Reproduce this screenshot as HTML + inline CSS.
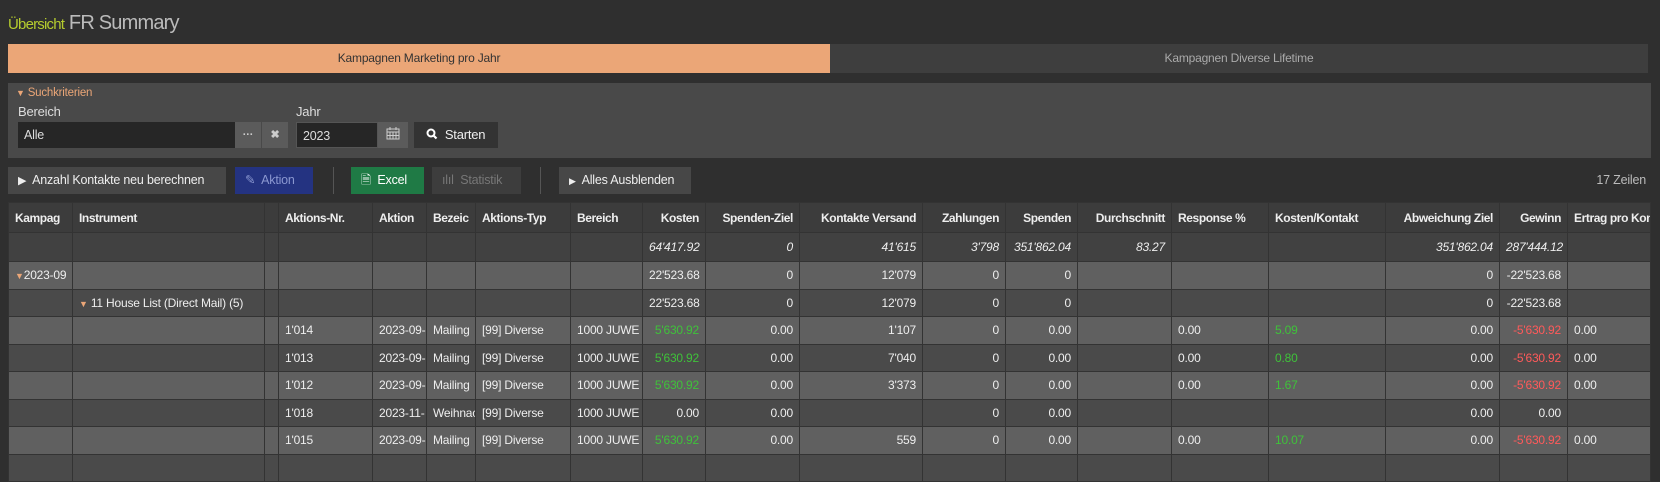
<!DOCTYPE html>
<html><head><meta charset="utf-8"><style>
*{box-sizing:border-box;margin:0;padding:0}
body{width:1660px;height:452px;background:#2f2f2f;font-family:"Liberation Sans Narrow","Liberation Sans",sans-serif;font-size:12px;color:#eee;position:relative;overflow:hidden;letter-spacing:-0.2px}
.a{position:absolute}
.title{left:8px;top:12px;font-size:20px;color:#bbb;letter-spacing:-0.8px}
.title span{color:#b5cc2e;font-size:15px}
.tab{top:44px;height:29px;line-height:29px;text-align:center;font-size:12px}
.panel{left:8px;top:83px;width:1643px;height:75px;background:#494949}
.lbl{font-size:13px;color:#ddd}
.inp{background:#262626;color:#ddd;height:26px;line-height:26px;padding-left:6px;font-size:12.5px}
.ib{background:#5b5b5b;height:26px;color:#ccc;text-align:center;line-height:26px;font-size:11px;font-weight:bold}
.btn{top:167px;height:27px;line-height:27px;font-size:12.5px;padding-left:10px}
.sep{top:167px;width:1px;height:27px;background:#555}
table{position:absolute;left:8px;top:202px;border-collapse:collapse;table-layout:fixed;width:1642px}
td{border:1px solid #333;height:27.5px;padding:0 6px;white-space:nowrap;overflow:hidden;font-size:12px;color:#eee}
tr.h td{background:#3c3c3c;font-weight:bold;height:30px;letter-spacing:-0.4px}
tr.t td{background:#414141;font-style:italic;height:29px}
tr.l td{background:#606060}
tr.d td{background:#4a4a4a}
.r{text-align:right}
.g{color:#3fc23a}.rd{color:#ff5a5a}
.tri{color:#eba677;font-size:9px}
</style></head><body>
<div class="a title"><span>Übersicht</span> FR Summary</div>
<div class="a tab" style="left:8px;width:822px;background:#eba677;color:#333">Kampagnen Marketing pro Jahr</div>
<div class="a tab" style="left:830px;width:818px;background:#3e3e3e;color:#aaa">Kampagnen Diverse Lifetime</div>
<div class="a panel"></div>
<div class="a" style="left:16px;top:87px;color:#eba677;font-size:11.5px"><span style="font-size:9px">▼</span> Suchkriterien</div>
<div class="a lbl" style="left:18px;top:104px">Bereich</div>
<div class="a lbl" style="left:296px;top:104px">Jahr</div>
<div class="a inp" style="left:18px;top:122px;width:217px">Alle</div>
<div class="a ib" style="left:235px;top:122px;width:26px">···</div>
<div class="a ib" style="left:262px;top:122px;width:26px">✖</div>
<div class="a inp" style="left:296px;top:122px;width:82px;border:1px solid #555">2023</div>
<div class="a ib" style="left:378px;top:122px;width:30px"><svg width="14" height="13" viewBox="0 0 14 13" style="vertical-align:-2px"><rect x="1" y="2" width="12" height="10" fill="none" stroke="#ccc"/><path d="M1 5h12M4 5v7M7 5v7M10 5v7M1 8.5h12M4 0v3M10 0v3" stroke="#ccc"/></svg></div>
<div class="a" style="left:414px;top:122px;width:84px;height:26px;background:#333;line-height:26px;font-size:13px;padding-left:12px"><svg width="12" height="12" viewBox="0 0 12 12" style="vertical-align:-1px"><circle cx="5" cy="5" r="3.5" fill="none" stroke="#fff" stroke-width="2"/><path d="M7.5 7.5l3 3" stroke="#fff" stroke-width="2.2"/></svg>&nbsp; Starten</div>
<div class="a btn" style="left:8px;width:218px;background:#474747"><span style="font-size:11px">▶</span>&nbsp; Anzahl Kontakte neu berechnen</div>
<div class="a btn" style="left:235px;width:78px;background:#243381;color:#8a97d0">✎&nbsp; Aktion</div>
<div class="a sep" style="left:333px"></div>
<div class="a btn" style="left:351px;width:73px;background:#1f7a45;color:#fff">🗎&nbsp; Excel</div>
<div class="a btn" style="left:432px;width:89px;background:#3d3d3d;color:#777">ılıl&nbsp; Statistik</div>
<div class="a sep" style="left:540px"></div>
<div class="a btn" style="left:559px;width:132px;background:#474747"><span style="font-size:9px">▶</span>&nbsp; Alles Ausblenden</div>
<div class="a" style="right:14px;top:173px;color:#bbb;font-size:12.5px">17 Zeilen</div>
<table>
<colgroup><col style="width:64px"><col style="width:192px"><col style="width:14px"><col style="width:94px"><col style="width:54px"><col style="width:49px"><col style="width:95px"><col style="width:72px"><col style="width:63px"><col style="width:94px"><col style="width:123px"><col style="width:83px"><col style="width:72px"><col style="width:94px"><col style="width:97px"><col style="width:117px"><col style="width:114px"><col style="width:68px"><col style="width:83px"></colgroup>
<tr class="h"><td>Kampag</td><td>Instrument</td><td></td><td>Aktions-Nr.</td><td>Aktion</td><td>Bezeic</td><td>Aktions-Typ</td><td>Bereich</td><td class="r">Kosten</td><td class="r">Spenden-Ziel</td><td class="r">Kontakte Versand</td><td class="r">Zahlungen</td><td class="r">Spenden</td><td class="r">Durchschnitt</td><td>Response %</td><td>Kosten/Kontakt</td><td class="r">Abweichung Ziel</td><td class="r">Gewinn</td><td>Ertrag pro Kontakt</td></tr>
<tr class="t"><td></td><td></td><td></td><td></td><td></td><td></td><td></td><td></td><td class="r">64'417.92</td><td class="r">0</td><td class="r">41'615</td><td class="r">3'798</td><td class="r">351'862.04</td><td class="r">83.27</td><td></td><td></td><td class="r">351'862.04</td><td class="r">287'444.12</td><td></td></tr>
<tr class="l"><td style="padding-left:6px"><span class="tri">▼</span>2023-09</td><td></td><td></td><td></td><td></td><td></td><td></td><td></td><td class="r">22'523.68</td><td class="r">0</td><td class="r">12'079</td><td class="r">0</td><td class="r">0</td><td></td><td></td><td></td><td class="r">0</td><td class="r">-22'523.68</td><td></td></tr>
<tr class="d"><td></td><td><span class="tri">▼</span> 11 House List (Direct Mail) (5)</td><td></td><td></td><td></td><td></td><td></td><td></td><td class="r">22'523.68</td><td class="r">0</td><td class="r">12'079</td><td class="r">0</td><td class="r">0</td><td></td><td></td><td></td><td class="r">0</td><td class="r">-22'523.68</td><td></td></tr>
<tr class="l"><td></td><td></td><td></td><td>1'014</td><td>2023-09-</td><td>Mailing</td><td>[99] Diverse</td><td>1000 JUWE (</td><td class="r g">5'630.92</td><td class="r">0.00</td><td class="r">1'107</td><td class="r">0</td><td class="r">0.00</td><td></td><td>0.00</td><td class="g">5.09</td><td class="r">0.00</td><td class="r rd">-5'630.92</td><td>0.00</td></tr>
<tr class="d"><td></td><td></td><td></td><td>1'013</td><td>2023-09-</td><td>Mailing</td><td>[99] Diverse</td><td>1000 JUWE (</td><td class="r g">5'630.92</td><td class="r">0.00</td><td class="r">7'040</td><td class="r">0</td><td class="r">0.00</td><td></td><td>0.00</td><td class="g">0.80</td><td class="r">0.00</td><td class="r rd">-5'630.92</td><td>0.00</td></tr>
<tr class="l"><td></td><td></td><td></td><td>1'012</td><td>2023-09-</td><td>Mailing</td><td>[99] Diverse</td><td>1000 JUWE (</td><td class="r g">5'630.92</td><td class="r">0.00</td><td class="r">3'373</td><td class="r">0</td><td class="r">0.00</td><td></td><td>0.00</td><td class="g">1.67</td><td class="r">0.00</td><td class="r rd">-5'630.92</td><td>0.00</td></tr>
<tr class="d"><td></td><td></td><td></td><td>1'018</td><td>2023-11-</td><td>Weihnachten</td><td>[99] Diverse</td><td>1000 JUWE (</td><td class="r">0.00</td><td class="r">0.00</td><td class="r"></td><td class="r">0</td><td class="r">0.00</td><td></td><td></td><td></td><td class="r">0.00</td><td class="r">0.00</td><td></td></tr>
<tr class="l"><td></td><td></td><td></td><td>1'015</td><td>2023-09-</td><td>Mailing</td><td>[99] Diverse</td><td>1000 JUWE (</td><td class="r g">5'630.92</td><td class="r">0.00</td><td class="r">559</td><td class="r">0</td><td class="r">0.00</td><td></td><td>0.00</td><td class="g">10.07</td><td class="r">0.00</td><td class="r rd">-5'630.92</td><td>0.00</td></tr>
<tr class="d"><td></td><td></td><td></td><td></td><td></td><td></td><td></td><td></td><td></td><td></td><td></td><td></td><td></td><td></td><td></td><td></td><td></td><td></td><td></td></tr>
</table>
</body></html>
